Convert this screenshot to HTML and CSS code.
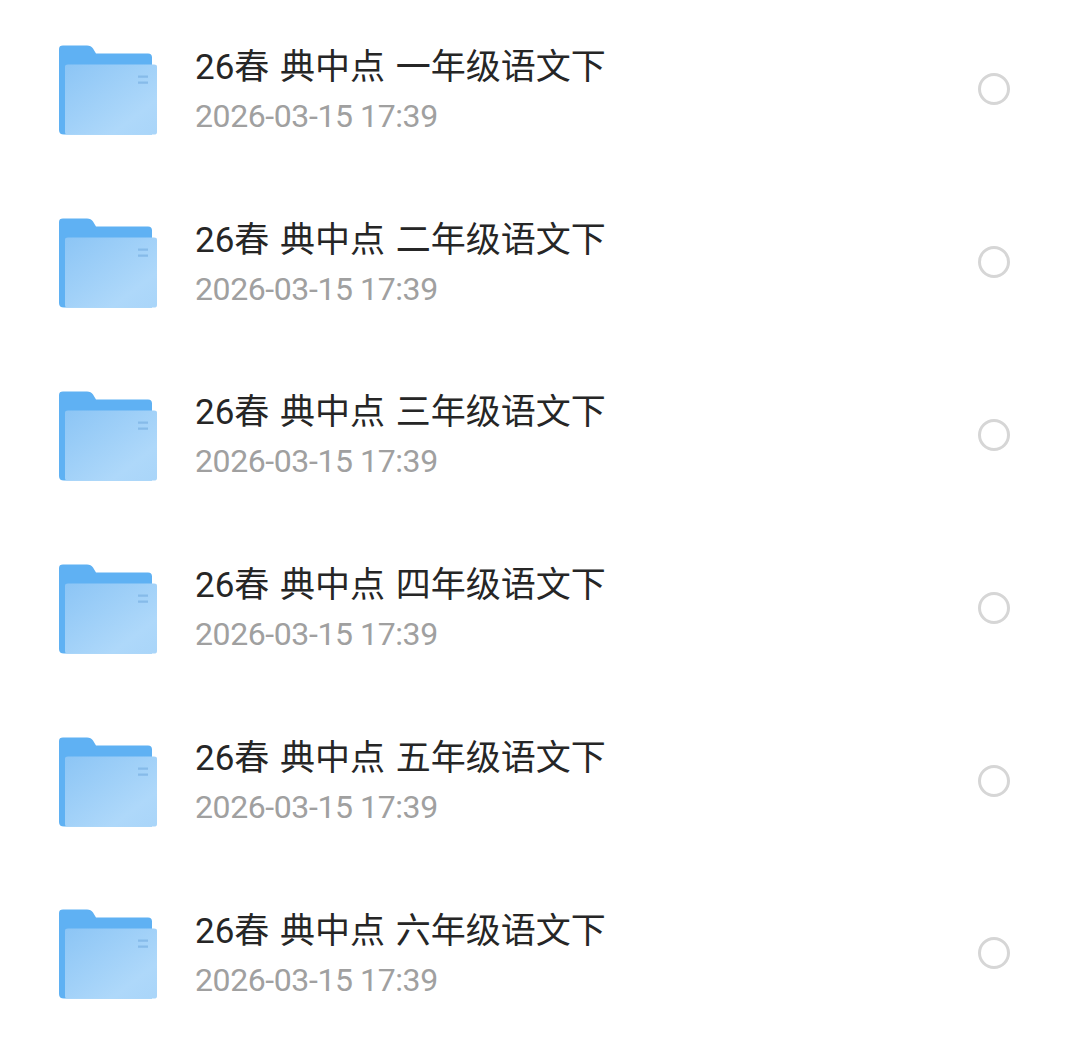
FILE: index.html
```html
<!DOCTYPE html>
<html>
<head lang="zh">
    <meta charset="UTF-8">
    <title>文件列表</title>
    <link rel="stylesheet" href="styles.css">
</head>
<body>
    <svg class="defs" width="0" height="0">
        <defs>
            <linearGradient id="front" x1="0" y1="0" x2="1" y2="1">
                <stop offset="0" stop-color="#8cc5f5"/>
                <stop offset="0.75" stop-color="#aed8fa"/>
                <stop offset="1" stop-color="#a9d5f9"/>
            </linearGradient>
            <symbol id="folder" viewBox="0 0 98 94">
                <path d="M0 7Q0 3.6 4 3.6H28Q32 3.6 34 6.5L37 11.6H89Q93 11.6 93 15.6V92.6H5Q0 92.6 0 88Z" fill="#5fb1f3"/>
                <path d="M6 25Q6 22.6 9 22.6H95Q98 22.6 98 25V90Q98 92.6 95 92.6H9Q6 92.6 6 90Z" fill="url(#front)"/>
                <path d="M79 34.6H89M79 40.6H89" stroke="#86bbe9" stroke-width="2.4"/>
            </symbol>
        </defs>
    </svg>
    <ul id="list">
        <li class="row">
            <svg class="folder"><use href="#folder"/></svg>
            <div class="info">
                <div class="name">26春 典中点 一年级语文下</div>
                <div class="date">2026-03-15 17:39</div>
            </div>
            <span class="radio"></span>
        </li>
        <li class="row">
            <svg class="folder"><use href="#folder"/></svg>
            <div class="info">
                <div class="name">26春 典中点 二年级语文下</div>
                <div class="date">2026-03-15 17:39</div>
            </div>
            <span class="radio"></span>
        </li>
        <li class="row">
            <svg class="folder"><use href="#folder"/></svg>
            <div class="info">
                <div class="name">26春 典中点 三年级语文下</div>
                <div class="date">2026-03-15 17:39</div>
            </div>
            <span class="radio"></span>
        </li>
        <li class="row">
            <svg class="folder"><use href="#folder"/></svg>
            <div class="info">
                <div class="name">26春 典中点 四年级语文下</div>
                <div class="date">2026-03-15 17:39</div>
            </div>
            <span class="radio"></span>
        </li>
        <li class="row">
            <svg class="folder"><use href="#folder"/></svg>
            <div class="info">
                <div class="name">26春 典中点 五年级语文下</div>
                <div class="date">2026-03-15 17:39</div>
            </div>
            <span class="radio"></span>
        </li>
        <li class="row">
            <svg class="folder"><use href="#folder"/></svg>
            <div class="info">
                <div class="name">26春 典中点 六年级语文下</div>
                <div class="date">2026-03-15 17:39</div>
            </div>
            <span class="radio"></span>
        </li>
    </ul>
</body>
</html>
```

FILE: styles.css
```css
*{
    padding: 0;
    margin: 0;
}
body{
    background: #ffffff;
    font-family: "Roboto", "Noto Sans CJK SC", sans-serif;
}
ul{
    list-style: none;
}
.defs{
    display: block;
}
#list{
    padding-top: 3px;
}
.row{
    height: 172.8px;
    padding: 0 70px 0 59px;
    display: flex;
    align-items: center;
}
.folder{
    width: 98px;
    height: 94px;
    flex: none;
    margin-right: 38px;
}
.info{
    flex: 1;
    padding-top: 2px;
}
.name{
    font-size: 35px;
    line-height: 46px;
    word-spacing: 2px;
    color: #262626;
}
.date{
    font-size: 32px;
    line-height: 40px;
    margin-top: 5px;
    color: #a0a0a0;
    letter-spacing: -0.4px;
}
.radio{
    width: 26px;
    height: 26px;
    border: 3px solid #d6d6d6;
    border-radius: 50%;
}
```
